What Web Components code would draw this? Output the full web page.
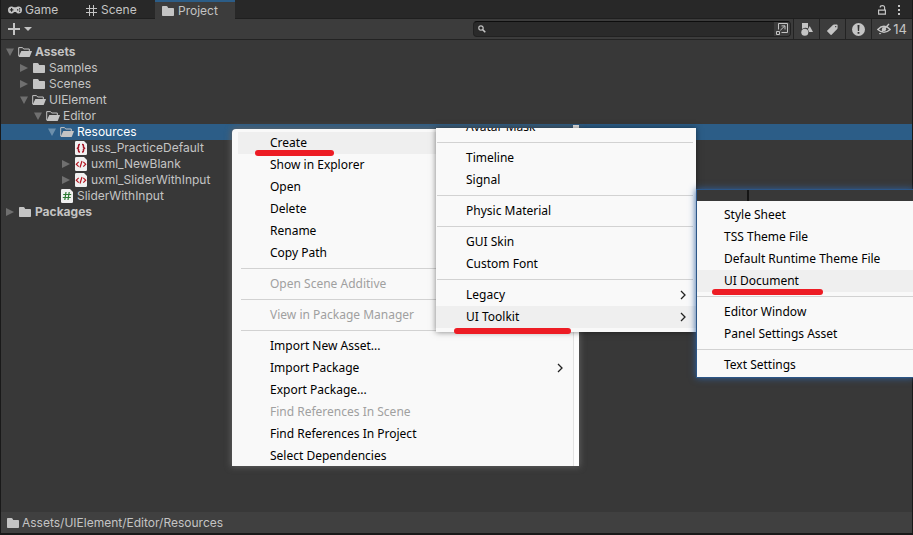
<!DOCTYPE html>
<html lang="en">
<head>
<meta charset="utf-8">
<title>Project</title>
<style>
body { margin: 0; background: #191919; font: 12px/16px Inter, "Noto Sans CJK SC", sans-serif; color: #c4c4c4; }
context-menu { position: absolute; }
#main-menu { left: 232px; top: 129px; width: 347px; }
#create-menu { left: 436px; top: 128px; width: 260px; }
#toolkit-menu { left: 697px; top: 190px; right: 0; }
ink-stroke { position: absolute; }
#stroke-create { left: 255px; top: 150px; width: 79px; }
#stroke-toolkit { left: 454px; top: 328px; width: 117px; }
#stroke-document { left: 712px; top: 289px; width: 111px; }
</style>
</head>
<body>
<project-window></project-window>

<context-menu id="main-menu" kind="main">
  <menu-item active>Create</menu-item>
  <menu-item>Show in Explorer</menu-item>
  <menu-item>Open</menu-item>
  <menu-item>Delete</menu-item>
  <menu-item>Rename</menu-item>
  <menu-item>Copy Path</menu-item>
  <menu-line></menu-line>
  <menu-item disabled>Open Scene Additive</menu-item>
  <menu-line></menu-line>
  <menu-item disabled>View in Package Manager</menu-item>
  <menu-line></menu-line>
  <menu-item>Import New Asset...</menu-item>
  <menu-item submenu>Import Package</menu-item>
  <menu-item>Export Package...</menu-item>
  <menu-item disabled>Find References In Scene</menu-item>
  <menu-item>Find References In Project</menu-item>
  <menu-item>Select Dependencies</menu-item>
</context-menu>

<context-menu id="create-menu" kind="scrolled">
  <menu-item>Avatar Mask</menu-item>
  <menu-line></menu-line>
  <menu-item>Timeline</menu-item>
  <menu-item>Signal</menu-item>
  <menu-line></menu-line>
  <menu-item>Physic Material</menu-item>
  <menu-line></menu-line>
  <menu-item>GUI Skin</menu-item>
  <menu-item>Custom Font</menu-item>
  <menu-line></menu-line>
  <menu-item submenu>Legacy</menu-item>
  <menu-item submenu active>UI Toolkit</menu-item>
</context-menu>

<context-menu id="toolkit-menu" kind="edge">
  <menu-item>Style Sheet</menu-item>
  <menu-item>TSS Theme File</menu-item>
  <menu-item>Default Runtime Theme File</menu-item>
  <menu-item active>UI Document</menu-item>
  <menu-line></menu-line>
  <menu-item>Editor Window</menu-item>
  <menu-item>Panel Settings Asset</menu-item>
  <menu-line></menu-line>
  <menu-item>Text Settings</menu-item>
</context-menu>

<ink-stroke id="stroke-create"></ink-stroke>
<ink-stroke id="stroke-toolkit"></ink-stroke>
<ink-stroke id="stroke-document"></ink-stroke>

<script>
const define = (name, html, setup) => customElements.define(name, class extends HTMLElement {
  constructor() {
    super();
    const t = document.createElement('template');
    t.innerHTML = html;
    this.attachShadow({ mode: 'open' }).append(t.content.cloneNode(true));
  }
  connectedCallback() { if (setup) setup(this, this.shadowRoot); }
});

const page = (ink, mark) => ['0 0 12 14', `<path fill="#f0f0f0" d="M1.2 0H9l3 3v9.8q0 1.2-1.2 1.2H1.2Q0 14 0 12.8V1.2Q0 0 1.2 0z"/><g fill="none" stroke="${ink}" stroke-width="1.5">${mark}</g>`, 12, 14];
const icons = {
  folder: ['0 0 12 10', '<path fill="#c4c4c4" d="M0 .8Q0 0 .8 0h3.7q.6 0 .9.6L6.200 2H11.200q.8 0 .8.8v6.4q0 .8-.8.8H.8Q0 10 0 9.200z"/>', 12, 10],
  open: ['0 0 14 10', '<path fill="none" stroke="#c4c4c4" d="M.7 9V.6h3.800L5.700 2H11.300v2"/><path fill="#c4c4c4" d="M3.300 4H13.600q.5 0 .3.500L11.900 9.400q-.2.600-.8.600H.5z"/>', 14, 10],
  game: ['0 0 14 8', '<path fill="#c4c4c4" fill-rule="evenodd" d="M3.500.5Q5 .4 5.800 1.200H8.200Q9 .4 10.500.5A3.500 3.500 0 0 1 10.500 7.500Q9 7.500 8 6H6Q5 7.500 3.500 7.500A3.500 3.500 0 0 1 3.500.5zM3 2v1.300H1.800v1.200H3v1.300h1.200V4.500h1.200V3.300H4.200V2zM9 3.200v1.400h1.300V3.200zm2-1v1.300h1.200V2.200zm0 2.300v1.300h1.200V4.500z"/>', 14, 8],
  scene: ['0 0 11 11', '<path fill="none" stroke="#c4c4c4" d="M3.500 0v11M7.500 0v11M0 3.500h11M0 7.500h11"/>', 11, 11],
  plus: ['0 0 12 12', '<path fill="none" stroke="#c4c4c4" stroke-width="2" d="M6 0v12M0 6h12"/>', 12, 12],
  down: ['0 0 8 4', '<path fill="#c4c4c4" d="M0 0h8L4 4z"/>', 8, 4],
  search: ['0 0 8 8', '<circle cx="3" cy="3" r="2.200" fill="none" stroke="#c4c4c4" stroke-width="1.200"/><path stroke="#c4c4c4" stroke-width="1.500" d="M4.600 4.600L7.300 7.300"/>', 8, 8],
  popout: ['0 0 12 12', '<path fill="none" stroke="#c4c4c4" d="M2.500 6.500V.5h9v9H5.500M.5 8.500h3v3h-3zM4.300 7.300L8.800 2.900M5.500 2.900H9v3.500"/>', 12, 12],
  shapes: ['0 0 12 13', '<path fill="#c4c4c4" d="M1 0h6v5.300Q5.500 4.600 4 4.800T1 6z"/><circle cx="3.800" cy="9.200" r="3.500" fill="#c4c4c4"/><path fill="#c4c4c4" d="M8.700 3l3.300 6H8L7 6.200z"/>', 12, 13],
  tag: ['0 0 11 11', '<path fill="#c4c4c4" fill-rule="evenodd" d="M.3 6.500L5.900.9Q6.300.5 7 .5h2.800q.8 0 .8.800v2.800q0 .6-.4 1L4.600 10.700q-.5.500-1 0L.3 7.400q-.5-.5 0-.9zM8.100 2v1.200h1.200V2z"/>', 11, 11],
  alert: ['0 0 13 13', '<circle cx="6.500" cy="6.500" r="6.500" fill="#c4c4c4"/><path fill="#303030" d="M5.500 2h2L7.100 8H5.900zM5.600 9h1.800v1.800H5.600z"/>', 13, 13],
  hidden: ['0 0 14 12', '<path fill="none" stroke="#c4c4c4" stroke-width="1.400" d="M.8 6.500Q7 0 13.200 6.500 7 12 .8 6.500zM2.500 11L12 1"/><circle cx="7" cy="6.200" r="2.100" fill="#c4c4c4"/>', 14, 12],
  lock: ['0 0 8 10', '<path fill="none" stroke="#c4c4c4" stroke-width="1.200" d="M.6 5.100h6.800v4.100H.6zM6.600 5V2.600Q6.600.6 4.400.6T2.200 2.400"/>', 8, 10],
  dots: ['0 0 2 10', '<path fill="#c4c4c4" d="M0 0h2v2H0zM0 4h2v2H0zM0 8h2v2H0z"/>', 2, 10],
  right: ['0 0 8 8', '<path fill="#6f6f6f" d="M0 0l8 4-8 4z"/>', 8, 8],
  fold: ['0 0 8 8', '<path fill="currentColor" d="M0 .5h8L4 8z"/>', 8, 8],
  uss: page('#a31021', '<path d="M5 3.500H4.500Q3.500 3.500 3.500 5v1.200L2.500 7.200l1 1V9.500Q3.500 11 4.500 11H5M7 3.500h.5q1 0 1 1.500v1.200l1 1-1 1v1.300q0 1.500-1 1.500H7"/>'),
  uxml: page('#b3141f', '<path stroke-width="1.200" d="M3.700 4.800L1.300 7.200l2.400 2.400M8.300 4.800l2.400 2.400-2.400 2.400M7 4L5 10.500"/>'),
  cs: page('#2d7a34', '<path stroke-width="1.200" d="M5 3L3.800 11M8.200 3L7 11M2.200 5.500h8M1.800 8.500h8"/>'),
  chevron: ['0 0 6 10', '<path fill="none" stroke="#222" stroke-width="1.300" d="M1 1l4 4-4 4"/>', 6, 10]
};

define('ui-icon', `<style>:host{display:inline-flex;flex:none;align-items:center;justify-content:center}svg{display:block}</style><span></span>`, (el, root) => {
  const [box, art, w, h] = icons[el.getAttribute('name')];
  root.querySelector('span').innerHTML = `<svg aria-hidden="true" viewBox="${box}" width="${w}" height="${h}">${art}</svg>`;
});

define('tab-button', `<style>
:host{display:block;width:78px}
button{all:unset;box-sizing:border-box;display:flex;align-items:center;gap:3px;width:100%;height:19px;padding:2px 0 0 7px;border-bottom:1px solid #1f1f1f}
ui-icon{width:14px;height:14px}
:host([active]) button{background:#3c3c3c;border-top:2px solid #2c5d87;border-bottom-color:#3c3c3c;padding-top:1px;padding-left:6px}
</style><button type="button" role="tab"><slot></slot></button>`, (el, root) => {
  const b = root.querySelector('button'), icon = document.createElement('ui-icon');
  icon.setAttribute('name', el.getAttribute('icon'));
  b.prepend(icon);
  b.setAttribute('aria-selected', el.hasAttribute('active'));
});

define('tool-button', `<style>
:host{display:block;width:26px}
button{all:unset;box-sizing:border-box;display:flex;align-items:center;justify-content:center;gap:2px;width:100%;height:20px;border-left:1px solid #232323;font-size:13px}
:host([wide]){width:41px}
:host([plain]) button{border-left:0;height:14px}
</style><button type="button"><slot></slot></button>`, (el, root) => {
  root.querySelector('button').setAttribute('aria-label', el.getAttribute('label'));
});

define('tree-row', `<style>
:host{display:block;color:#c4c4c4}
.row{display:flex;align-items:center;height:16px;padding-left:calc(4px + 14px * var(--depth,0))}
button{all:unset;display:flex;justify-content:center;width:10px;height:16px;margin-right:3px;color:#6f6f6f}
.type{width:14px;height:16px;margin-right:3px}
:host([bold]){font-weight:700}
:host([selected]){background:#2c5d87;color:#fff}
:host([selected]) button{color:#6c8fac}
</style><div class="row"></div>`, (el, root) => {
  const row = root.querySelector('.row'), fold = el.getAttribute('fold');
  row.style.setProperty('--depth', el.getAttribute('depth'));
  el.setAttribute('role', 'treeitem');
  row.innerHTML = (fold ? `<button type="button" aria-label="Toggle"><ui-icon name="${fold}"></ui-icon></button>` : '<button type="button" tabindex="-1" aria-label="Item"></button>')
    + `<ui-icon class="type" name="${el.getAttribute('icon')}"></ui-icon><slot></slot>`;
});

define('project-window', `<style>
:host{display:flex;flex-direction:column;min-height:100vh;box-sizing:border-box;border:solid #191919;border-width:0 1px 2px;background:#383838}
.tabs{display:flex;height:19px;background:#282828;box-shadow:inset 0 -1px #1f1f1f}
.tabs .end{display:flex;align-items:center;gap:12px;margin-left:auto;padding-right:12px}
.end button{all:unset;display:flex}
tab-button:last-of-type{width:80px}
tab-button:first-of-type{width:76px}
.bar{display:flex;align-items:center;height:20px;background:#3c3c3c;border-bottom:1px solid #232323}
.add{all:unset;display:flex;align-items:center;gap:4px;padding-left:7px}
.search{box-sizing:border-box;display:flex;align-items:center;flex:0 1 318px;min-width:80px;height:16px;margin-left:auto;margin-right:2px;padding-left:4px;gap:4px;background:#2a2a2a;border:1px solid #212121;border-top-color:#0d0d0d;border-radius:4px;overflow:hidden}
input{all:unset;flex:1;min-width:0;font:inherit}
.search tool-button{width:16px;background:#3c3c3c}
.tree{flex:1;padding-top:4px}
.path{display:flex;align-items:center;gap:3px;height:21px;padding-left:6px;background:#404040}
</style>
<div class="tabs" role="tablist">
<tab-button icon="game">Game</tab-button><tab-button icon="scene">Scene</tab-button><tab-button icon="folder" active>Project</tab-button>
<div class="end"><button type="button" aria-label="Lock"><ui-icon name="lock"></ui-icon></button><button type="button" aria-label="More"><ui-icon name="dots"></ui-icon></button></div>
</div>
<div class="bar">
<button class="add" type="button" aria-label="Add"><ui-icon name="plus"></ui-icon><ui-icon name="down"></ui-icon></button>
<div class="search"><ui-icon name="search"></ui-icon><input type="text" aria-label="Search"><tool-button plain label="Pop out"><ui-icon name="popout"></ui-icon></tool-button></div>
<tool-button label="Type"><ui-icon name="shapes"></ui-icon></tool-button>
<tool-button label="Label"><ui-icon name="tag"></ui-icon></tool-button>
<tool-button label="Log"><ui-icon name="alert"></ui-icon></tool-button>
<tool-button wide label="Hidden"><ui-icon name="hidden"></ui-icon>14</tool-button>
</div>
<div class="tree" role="tree">
<tree-row depth="0" fold="fold" icon="open" bold>Assets</tree-row>
<tree-row depth="1" fold="right" icon="folder">Samples</tree-row>
<tree-row depth="1" fold="right" icon="folder">Scenes</tree-row>
<tree-row depth="1" fold="fold" icon="open">UIElement</tree-row>
<tree-row depth="2" fold="fold" icon="open">Editor</tree-row>
<tree-row depth="3" fold="fold" icon="open" selected>Resources</tree-row>
<tree-row depth="4" icon="uss">uss_PracticeDefault</tree-row>
<tree-row depth="4" fold="right" icon="uxml">uxml_NewBlank</tree-row>
<tree-row depth="4" fold="right" icon="uxml">uxml_SliderWithInput</tree-row>
<tree-row depth="3" icon="cs">SliderWithInput</tree-row>
<tree-row depth="0" fold="right" icon="folder" bold>Packages</tree-row>
</div>
<div class="path"><ui-icon name="folder"></ui-icon><span>Assets/UIElement/Editor/Resources</span></div>`);

define('context-menu', `<style>
:host{display:block;background:#f9f9f9;color:#000;font:12px/22px "Noto Sans","Noto Sans CJK SC",sans-serif;--inset:38px;--line-left:9px}
.clip{overflow:hidden}
:host([kind=main]){border-radius:4px 0 0;border-right:5px solid #fdfdfd;box-sizing:border-box;box-shadow:0 0 6px 1px #606060}
:host([kind=main]) .clip{padding-top:3px;border-right:1px solid #e2e2e2;--active-left:6px;--arrow:10px}
:host([kind=main]) .list{margin-bottom:-1px}
:host([kind=main])::after{content:"";position:absolute;top:-4px;right:-5px;width:6px;height:4px;background:#e6e6e6}
:host([kind=scrolled]){--inset:30px;--line-left:1px;--line-right:3px;--arrow:10px;box-shadow:0 0 6px #00000080}
:host([kind=scrolled]) .list{margin-top:-12px;padding-bottom:4px}
:host([kind=edge]){--inset:27px;--line-left:0px;box-shadow:0 0 0 1px #2c5687,0 0 7px 1px #2f609f}
:host([kind=edge]) .clip{border-top:11px solid #383838;padding:3px 0 1px}
:host([kind=edge])::after{content:"";position:absolute;top:0;left:50px;width:2px;height:11px;background:#151515}
</style><div class="clip" role="menu"><div class="list"><slot></slot></div></div>`);

define('menu-item', `<style>
:host{display:block}
button{all:unset;box-sizing:border-box;display:flex;align-items:center;justify-content:space-between;width:100%;height:22px;padding:0 var(--arrow,0px) 0 var(--inset);white-space:nowrap}
:host([active]) button{background:linear-gradient(#efefef,#efefef) var(--active-left,0px) 0 no-repeat}
:host([disabled]) button{color:#a0a0a0}
</style><button type="button" role="menuitem"><span><slot></slot></span></button>`, (el, root) => {
  const b = root.querySelector('button');
  b.disabled = el.hasAttribute('disabled');
  if (el.hasAttribute('submenu') && !root.querySelector('ui-icon')) {
    const i = document.createElement('ui-icon'); i.setAttribute('name', 'chevron'); b.append(i);
  }
});

define('menu-line', `<style>:host{display:block;padding:4px var(--line-right,0px) 4px var(--line-left)}div{height:1px;background:#d2d2d2}</style><div role="separator"></div>`);
define('ink-stroke', `<style>:host{display:block;height:6px;border-radius:3px;background:#ed1c24}</style>`);
</script>
</body>
</html>
